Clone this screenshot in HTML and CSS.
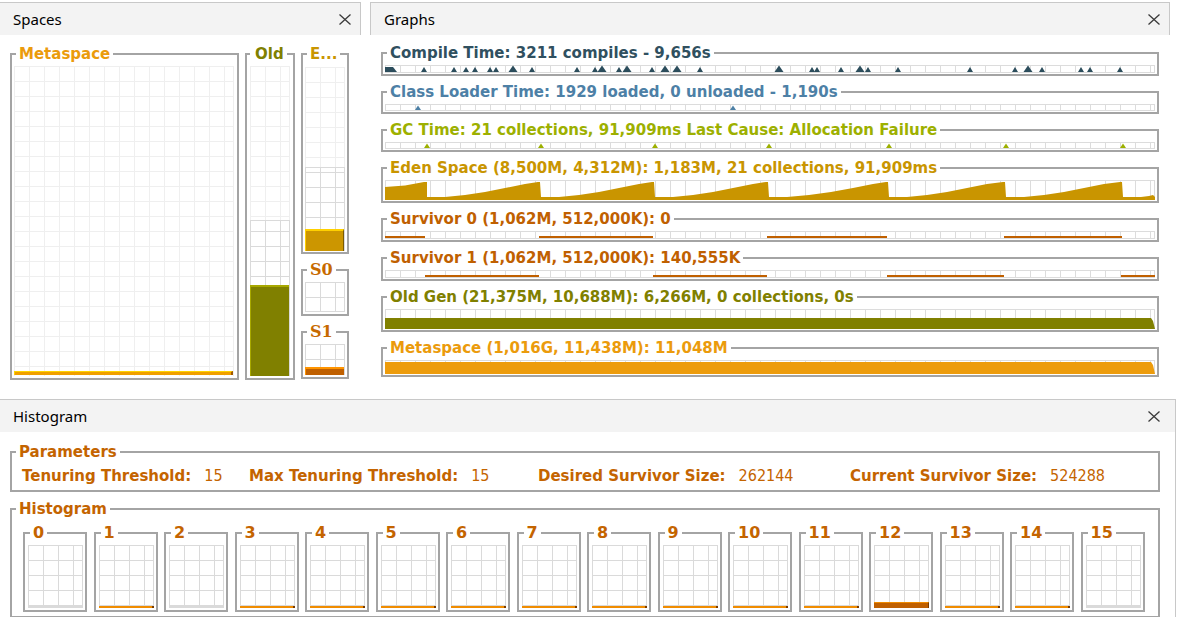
FILE: index.html
```html
<!DOCTYPE html>
<html>
<head>
<meta charset="utf-8">
<link rel="stylesheet" href="styles.css">
</head>
<body>
<div class="top">
  <section class="panel spaces">
    <header class="ph"><span>Spaces</span><svg class="x" width="12" height="11" viewBox="0 0 12 11"><path d="M0.5 0.5 L11.5 10.5 M11.5 0.5 L0.5 10.5"/></svg></header>
    <div class="spaces-body">
      <fieldset class="box meta-box"><legend class="c-meta">Metaspace</legend>
        <div class="sgrid light meta-grid"><div class="fill meta-fill"></div></div>
      </fieldset>
      <fieldset class="box old-box"><legend class="c-old lg-old">Old</legend>
        <div class="sgrid light old-grid"><div class="commit old-commit"><div class="fill old-fill"></div></div></div>
      </fieldset>
      <div class="scol">
        <fieldset class="box col-box eden-box"><legend class="c-eden lg-col">E...</legend>
          <div class="sgrid light eden-grid"><div class="commit eden-commit"><div class="fill eden-fill"></div></div></div>
        </fieldset>
        <fieldset class="box col-box s-box"><legend class="c-s lg-col serif">S0</legend>
          <div class="sgrid dark s0-grid"></div>
        </fieldset>
        <fieldset class="box col-box s-box"><legend class="c-s lg-col serif">S1</legend>
          <div class="sgrid dark s1-grid"><div class="fill s1-fill"></div></div>
        </fieldset>
      </div>
    </div>
  </section>
  <section class="panel graphs">
    <header class="ph ph-graphs"><span>Graphs</span><svg class="x" width="12" height="11" viewBox="0 0 12 11"><path d="M0.5 0.5 L11.5 10.5 M11.5 0.5 L0.5 10.5"/></svg></header>
    <div class="graphs-body">
      <fieldset class="box gbox"><legend class="c-compile">Compile Time: 3211 compiles - 9,656s</legend>
        <svg class="strip st8" viewBox="0 0 770 8" preserveAspectRatio="none">
          <g class="tri-compile">
            <polygon points="0,7 0,2 8,2 12,7"/>
            <polygon points="36,7 39,2 42,7"/><polygon points="66,7 69,2 72,7"/><polygon points="78,7 81,2 84,7"/><polygon points="87,7 90,2 93,7"/>
            <polygon points="102,7 105,2 108,7"/><polygon points="108,7 111,2 114,7"/><polygon points="123.5,7 128,0.5 132.5,7"/><polygon points="144,7 147,2 150,7"/>
            <polygon points="189,7 192,2 195,7"/><polygon points="207,7 210,2 213,7"/><polygon points="212.5,7 217,0.5 221.5,7"/><polygon points="231,7 234,2 237,7"/>
            <polygon points="237.5,7 242,0.5 246.5,7"/><polygon points="264,7 267,2 270,7"/><polygon points="275.5,7 280,0.5 284.5,7"/><polygon points="287.5,7 292,0.5 296.5,7"/>
            <polygon points="312,7 315,2 318,7"/><polygon points="389.5,7 394,0.5 398.5,7"/><polygon points="424,7 427,2 430,7"/><polygon points="429,7 432,2 435,7"/>
            <polygon points="453,7 456,2 459,7"/><polygon points="470.5,7 475,0.5 479.5,7"/><polygon points="480,7 483,2 486,7"/><polygon points="510,7 513,2 516,7"/>
            <polygon points="582,7 585,2 588,7"/><polygon points="627,7 630,2 633,7"/><polygon points="638.5,7 643,0.5 647.5,7"/><polygon points="654,7 657,2 660,7"/>
            <polygon points="693,7 696,2 699,7"/><polygon points="702,7 705,2 708,7"/><polygon points="732,7 735,2 738,7"/>
          </g>
        </svg>
      </fieldset>
      <fieldset class="box gbox"><legend class="c-class">Class Loader Time: 1929 loaded, 0 unloaded - 1,190s</legend>
        <svg class="strip st7" viewBox="0 0 770 7" preserveAspectRatio="none">
          <g class="tri-class"><polygon points="30,6 33,1.5 36,6"/><polygon points="345,6 348,1.5 351,6"/></g>
        </svg>
      </fieldset>
      <fieldset class="box gbox"><legend class="c-gc">GC Time: 21 collections, 91,909ms Last Cause: Allocation Failure</legend>
        <svg class="strip st7" viewBox="0 0 770 7" preserveAspectRatio="none">
          <g class="tri-gc">
            <polygon points="39,6 42,1.5 45,6"/><polygon points="153,6 156,1.5 159,6"/><polygon points="267,6 270,1.5 273,6"/><polygon points="381,6 384,1.5 387,6"/>
            <polygon points="501,6 504,1.5 507,6"/><polygon points="618,6 621,1.5 624,6"/><polygon points="735,6 738,1.5 741,6"/>
          </g>
        </svg>
      </fieldset>
      <fieldset class="box gbox"><legend class="c-eden">Eden Space (8,500M, 4,312M): 1,183M, 21 collections, 91,909ms</legend>
        <svg class="strip st20 nobottom" viewBox="0 0 770 20" preserveAspectRatio="none">
          <polygon class="f-eden" points="0,20 0,7 20,5.5 39,2 42,2 42,17 60,17 80,15 100,12 120,8 140,4 153,2 155,2 156,17 174,17 194,15 214,12 234,8 254,4 267,2 269,2 270,17 288,17 308,15 328,12 348,8 368,4 381,2 383,2 384,17 402,17 424,15 446,12 468,8 488,4 501,2 503,2 504,17 522,17 542,15 562,12 582,8 602,4 618,2 620,2 621,17 639,17 659,15 679,12 699,8 719,4 735,2 737,2 738,17 756,17 764,16 768,15 770,17 770,20"/>
        </svg>
      </fieldset>
      <fieldset class="box gbox"><legend class="c-surv">Survivor 0 (1,062M, 512,000K): 0</legend>
        <svg class="strip st8" viewBox="0 0 770 8" preserveAspectRatio="none">
          <g class="f-surv"><rect x="0" y="5" width="40" height="2"/><rect x="154" y="5" width="114" height="2"/><rect x="382" y="5" width="120" height="2"/><rect x="619" y="5" width="118" height="2"/></g>
        </svg>
      </fieldset>
      <fieldset class="box gbox"><legend class="c-surv">Survivor 1 (1,062M, 512,000K): 140,555K</legend>
        <svg class="strip st8" viewBox="0 0 770 8" preserveAspectRatio="none">
          <g class="f-surv"><rect x="40" y="5" width="114" height="2"/><rect x="268" y="5" width="114" height="2"/><rect x="502" y="5" width="117" height="2"/><rect x="736" y="5" width="34" height="2"/></g>
        </svg>
      </fieldset>
      <fieldset class="box gbox"><legend class="c-old">Old Gen (21,375M, 10,688M): 6,266M, 0 collections, 0s</legend>
        <svg class="strip st20 nobottom" viewBox="0 0 770 20" preserveAspectRatio="none">
          <polygon class="f-old" points="0,9 766,9 768,12 770,20 0,20"/>
        </svg>
      </fieldset>
      <fieldset class="box gbox"><legend class="c-meta">Metaspace (1,016G, 11,438M): 11,048M</legend>
        <svg class="strip st14 nobottom" viewBox="0 0 770 14" preserveAspectRatio="none">
          <polygon class="f-meta" points="0,2 766,2 768,5 770,14 0,14"/>
        </svg>
      </fieldset>
    </div>
  </section>
</div>
<section class="panel hist">
  <header class="ph ph-hist"><span>Histogram</span><svg class="x" width="12" height="11" viewBox="0 0 12 11"><path d="M0.5 0.5 L11.5 10.5 M11.5 0.5 L0.5 10.5"/></svg></header>
  <div class="hist-body">
    <fieldset class="box pbox"><legend class="c-param">Parameters</legend>
      <div class="prow">
        <div class="pair"><span class="pl">Tenuring Threshold:</span><span class="pv">15</span></div>
        <div class="pair"><span class="pl">Max Tenuring Threshold:</span><span class="pv">15</span></div>
        <div class="pair"><span class="pl">Desired Survivor Size:</span><span class="pv">262144</span></div>
        <div class="pair"><span class="pl">Current Survivor Size:</span><span class="pv">524288</span></div>
      </div>
    </fieldset>
    <fieldset class="box hbox"><legend class="c-param">Histogram</legend>
      <div class="hrow">
        <fieldset class="box hitem"><legend class="c-param hl">0</legend><div class="hgrid"><div class="bar empty"></div></div></fieldset>
        <fieldset class="box hitem"><legend class="c-param hl">1</legend><div class="hgrid"><div class="bar on"></div></div></fieldset>
        <fieldset class="box hitem"><legend class="c-param hl">2</legend><div class="hgrid"><div class="bar empty"></div></div></fieldset>
        <fieldset class="box hitem"><legend class="c-param hl">3</legend><div class="hgrid"><div class="bar on"></div></div></fieldset>
        <fieldset class="box hitem"><legend class="c-param hl">4</legend><div class="hgrid"><div class="bar on"></div></div></fieldset>
        <fieldset class="box hitem"><legend class="c-param hl">5</legend><div class="hgrid"><div class="bar on"></div></div></fieldset>
        <fieldset class="box hitem"><legend class="c-param hl">6</legend><div class="hgrid"><div class="bar on"></div></div></fieldset>
        <fieldset class="box hitem"><legend class="c-param hl">7</legend><div class="hgrid"><div class="bar on"></div></div></fieldset>
        <fieldset class="box hitem"><legend class="c-param hl">8</legend><div class="hgrid"><div class="bar on"></div></div></fieldset>
        <fieldset class="box hitem"><legend class="c-param hl">9</legend><div class="hgrid"><div class="bar on"></div></div></fieldset>
        <fieldset class="box hitem"><legend class="c-param hl">10</legend><div class="hgrid"><div class="bar on"></div></div></fieldset>
        <fieldset class="box hitem"><legend class="c-param hl">11</legend><div class="hgrid"><div class="bar on"></div></div></fieldset>
        <fieldset class="box hitem"><legend class="c-param hl">12</legend><div class="hgrid"><div class="bar big"></div></div></fieldset>
        <fieldset class="box hitem"><legend class="c-param hl">13</legend><div class="hgrid"><div class="bar on"></div></div></fieldset>
        <fieldset class="box hitem"><legend class="c-param hl">14</legend><div class="hgrid"><div class="bar on"></div></div></fieldset>
        <fieldset class="box hitem"><legend class="c-param hl">15</legend><div class="hgrid"><div class="bar empty"></div></div></fieldset>
      </div>
    </fieldset>
  </div>
</section>
</body>
</html>
```

FILE: styles.css
```css
* { box-sizing: border-box; }
html, body { margin: 0; padding: 0; background: #fff; overflow: hidden; }
body { padding-top: 2px; font-family: "DejaVu Sans", sans-serif; width: 1179px; height: 617px; }

.top { display: flex; height: 397px; }
.spaces { width: 361px; }
.graphs { width: 800px; margin-left: 9px; }

.ph {
  height: 33px;
  border-top: 1px solid #c8c8c8;
  border-right: 1px solid #c8c8c8;
  background: #f3f3f3;
  display: flex;
  align-items: center;
  justify-content: space-between;
  padding: 0 9px 0 13px;
  font-family: "Noto Sans", sans-serif;
  font-size: 15px;
  color: #000;
}
.ph-graphs { border-left: 1px solid #c8c8c8; padding: 0 9px 0 13px; }
.ph-hist { padding: 0 15px 0 13px; }
.x { display: block; }
.x path { stroke: #3a3a3a; stroke-width: 1.3; fill: none; }

/* generic titled box */
.box {
  margin: 0;
  min-width: 0;
  border: 2px solid #a4a4a4;
}
.box > legend {
  font: bold 15px/16px "DejaVu Sans", sans-serif;
  padding: 0 3px;
  margin-left: 2px;
}
.serif { font-family: "DejaVu Serif", serif !important; font-size: 16px !important; }

.c-meta { color: #eb9b0c; }
.c-old { color: #808000; }
.c-eden { color: #c99500; }
.c-s { color: #c76a00; }
.c-compile { color: #30505f; }
.c-class { color: #4d80a6; }
.c-gc { color: #9db000; }
.c-surv { color: #c06000; }
.c-param { color: #c46400; }

/* spaces */
.spaces-body { display: flex; gap: 6px; padding: 11px 0 0 10px; align-items: flex-start; }
.meta-box { width: 229px; padding: 4px 3px 2px 2px; }
.old-box { width: 50px; padding: 4px 3px 2px 3px; }
.old-box > legend.lg-old { margin-left: 0; padding: 0 3px 0 5px; }
.scol { display: flex; flex-direction: column; gap: 8px; width: 48px; }
.col-box { width: 48px; padding: 4px 2px 2px 2px; }
.col-box > legend.lg-col { margin-left: 2px; padding: 0 3px; }
.eden-box { padding-top: 5px; padding-bottom: 1px; }

.sgrid {
  display: flex;
  flex-direction: column;
  justify-content: flex-end;
  background-size: 15px 15px;
  border-right: 1px solid;
}
.sgrid.light {
  border-color: #efefef;
  background-image: linear-gradient(to right, #efefef 1px, transparent 1px), linear-gradient(to bottom, #efefef 1px, transparent 1px);
}
.sgrid.dark, .commit {
  border-color: #dadada;
  background-image: linear-gradient(to right, #dadada 1px, transparent 1px), linear-gradient(to bottom, #dadada 1px, transparent 1px);
  background-size: 15px 15px;
}
.commit {
  display: flex;
  flex-direction: column;
  justify-content: flex-end;
  border-top: 1px solid #dadada;
  margin-right: -1px;
  border-right: 1px solid #dadada;
}
.meta-grid { height: 310px; }
.meta-fill { height: 4px; background: #f0a000; border-top: 1px solid #ffd400; border-left: 1px solid #ffd400; border-right: 2px solid #a05800; margin-bottom: 1px; }
.old-grid { height: 310px; }
.old-commit { height: 156px; background-position: 0 10px; }
.old-fill { height: 91px; background: #808000; border-top: 2px solid #a8a800; border-left: 1px solid #a8a800; }
.eden-grid { height: 184px; }
.eden-commit { height: 84px; background-position: 0 4px; }
.eden-fill { height: 22px; background: #cc9600; border-top: 2px solid #ffd000; border-left: 1px solid #ffd000; border-right: 1px solid #7a5a00; }
.s0-grid { height: 30px; border-bottom: 1px solid #dadada; }
.s1-grid { height: 31px; }
.s1-fill { height: 8px; background: #c06000; border-top: 2px solid #ff9400; border-left: 1px solid #ff9400; }

/* graphs */
.graphs-body { display: flex; flex-direction: column; gap: 8px; padding: 10px 10px 0 11px; }
.gbox { width: 778px; padding: 4px 2px 1px 2px; }
.strip {
  display: block;
  width: 770px;
  background:
    linear-gradient(#dcdcdc, #dcdcdc) left top / 100% 1px no-repeat,
    linear-gradient(#dcdcdc, #dcdcdc) left bottom / 100% 1px no-repeat,
    linear-gradient(#dcdcdc, #dcdcdc) right top / 1px 100% no-repeat,
    linear-gradient(to right, #dcdcdc 1px, transparent 1px) 0 0 / 15px 100% repeat-x;
}
.strip.nobottom {
  background:
    linear-gradient(#dcdcdc, #dcdcdc) left top / 100% 1px no-repeat,
    linear-gradient(#dcdcdc, #dcdcdc) right top / 1px 100% no-repeat,
    linear-gradient(to right, #dcdcdc 1px, transparent 1px) 0 0 / 15px 100% repeat-x;
}
.st7 { height: 7px; }
.st8 { height: 8px; }
.st14 { height: 14px; }
.st20 { height: 20px; }
.tri-compile polygon { fill: #2c4d5c; }
.tri-class polygon { fill: #4d80a6; }
.tri-gc polygon { fill: #9db000; }
.f-eden { fill: #c99500; }
.f-surv rect { fill: #c06000; }
.f-old { fill: #808000; }
.f-meta { fill: #ed9c0c; }

/* histogram */
.hist { width: 1176px; }
.hist-body { border-right: 1px solid #c8c8c8; height: 185px; padding: 12px 0 0 10px; }
.pbox { width: 1150px; padding: 6px 2px 4px 2px; }
.prow {
  display: grid;
  grid-template-columns: 227px 289px 312px auto;
  padding-left: 8px;
  height: 20px;
  line-height: 20px;
  color: #c46400;
}
.pl { font-weight: bold; font-size: 15px; }
.pv { font-size: 16px; margin-left: 13px; font-stretch: condensed; }
.hbox { width: 1150px; margin-top: 9px; padding: 8px 2px 4px 2px; }
.hrow { display: flex; gap: 6.5px; padding-left: 9px; }
.hitem { width: 64px; flex: none; padding: 4px 2px 2px 3px; }
.hitem > legend.hl { font-size: 16px; margin-left: 2px; }
.hgrid {
  height: 63px;
  width: 55px;
  display: flex;
  flex-direction: column;
  justify-content: flex-end;
  border-right: 1px solid #dadada;
  background-image: linear-gradient(to right, #dadada 1px, transparent 1px), linear-gradient(to bottom, #dadada 1px, transparent 1px);
  background-size: 15px 15px;
}
.bar { height: 2px; margin-right: -1px; }
.bar.empty { background: #dadada; }
.bar.on { background: #f08c00; border-right: 2px solid #7a3c00; }
.bar.big { height: 6px; background: #c06000; border-top: 1px solid #f08c00; border-right: 1px solid #7a3c00; }
```
